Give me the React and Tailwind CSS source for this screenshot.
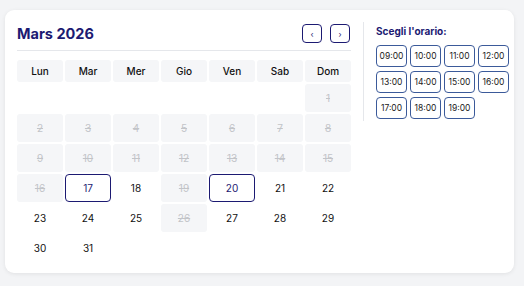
import React from "react";

const days = ["Lun", "Mar", "Mer", "Gio", "Ven", "Sab", "Dom"];
const times = ["09:00", "10:00", "11:00", "12:00", "13:00", "14:00", "15:00", "16:00", "17:00", "18:00", "19:00"];

// 2026 March starts on Sunday
const disabled = new Set([1, 2, 3, 4, 5, 6, 7, 8, 9, 10, 11, 12, 13, 14, 15, 16, 19, 26]);
const selected = new Set([17, 20]);

export default function App() {
  const cells = [];
  for (let i = 0; i < 6; i++) cells.push(null);
  for (let d = 1; d <= 31; d++) cells.push(d);

  return (
    <div className="w-[524px] h-[286px] bg-[#f3f4f6] pt-[10px] pl-[5px]" style={{ fontFamily: "Inter, 'Noto Sans', sans-serif" }}>
      <div className="w-[509px] h-[263px] bg-white rounded-[9px] shadow-[0_1px_4px_rgba(0,0,0,0.08)] flex pl-3">
        <div className="w-[334px] pt-[14px]">
          <div className="flex items-center justify-between h-[19px]">
            <div className="text-[14.5px] font-bold text-[#1c1a72] leading-none mt-[2px]">Mars 2026</div>
            <div className="flex gap-[8px] mr-[1px]">
              <button className="w-[20px] h-[19px] border border-[#1c1a72] rounded-[4px] flex items-center justify-center text-[#1c1a72] text-[8px] leading-none">‹</button>
              <button className="w-[20px] h-[19px] border border-[#1c1a72] rounded-[4px] flex items-center justify-center text-[#1c1a72] text-[8px] leading-none">›</button>
            </div>
          </div>
          <div className="h-px bg-[#e5e7eb] mt-[7px]" />
          <div className="grid grid-cols-7 gap-[2px] mt-[9px]">
            {days.map((d) => (
              <div key={d} className="h-[22px] bg-[#f5f6f8] rounded-[3px] flex items-center justify-center text-[10px] font-medium text-[#111]">
                {d}
              </div>
            ))}
          </div>
          <div className="grid grid-cols-7 gap-[2px] mt-[2px]">
            {cells.map((d, i) => {
              if (d === null) return <div key={i} className="h-[28px]" />;
              if (disabled.has(d))
                return (
                  <div key={i} className="h-[28px] bg-[#f5f6f8] rounded-[3px] flex items-center justify-center text-[10px] text-[#c2c4c8] line-through">
                    {d}
                  </div>
                );
              if (selected.has(d))
                return (
                  <div key={i} className="h-[28px] border border-[#1c1a72] rounded-[4px] flex items-center justify-center text-[10px] text-[#1c1a72]">
                    {d}
                  </div>
                );
              return (
                <div key={i} className="h-[28px] flex items-center justify-center text-[10px] text-[#111]">
                  {d}
                </div>
              );
            })}
          </div>
        </div>
        <div className="ml-[12px] mt-[12px] h-[99px] w-px bg-[#e5e7eb]" />
        <div className="pl-[12px] pt-[16px]">
          <div className="text-[10px] font-bold text-[#1c1a72] leading-none">Scegli l'orario:</div>
          <div className="grid grid-cols-[repeat(4,31px)] gap-x-[3px] gap-y-[4px] mt-[9px]">
            {times.map((t) => (
              <div key={t} className="h-[22px] border border-[#3b5a9a] rounded-[4px] flex items-center justify-center text-[8.5px] text-[#222]">
                {t}
              </div>
            ))}
          </div>
        </div>
      </div>
    </div>
  );
}
